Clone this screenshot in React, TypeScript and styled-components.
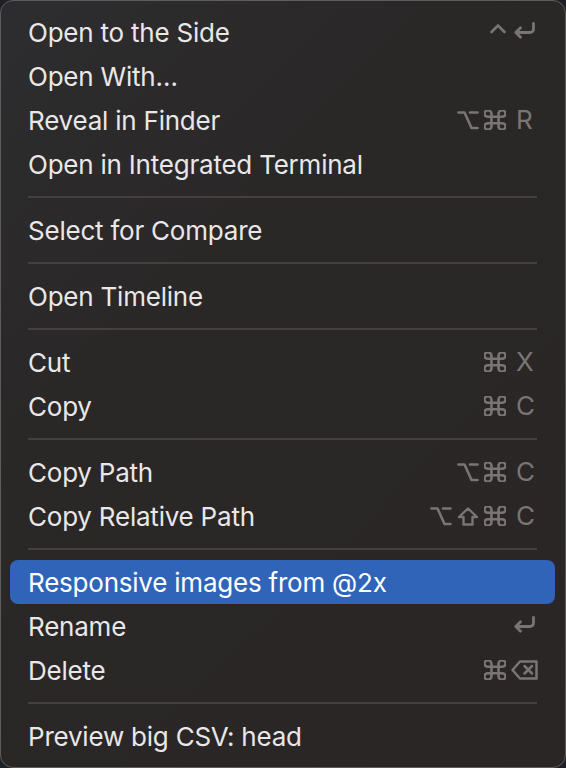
import styled, { createGlobalStyle } from "styled-components";

const GlobalStyle = createGlobalStyle`
  html, body {
    margin: 0;
    padding: 0;
    background: #1d2024;
  }
  body {
    font-family: Inter, "Noto Sans", "Liberation Sans", sans-serif;
    -webkit-font-smoothing: antialiased;
  }
`;

const KEY_COLOR = "#7a7574";

const Menu = styled.div`
  box-sizing: border-box;
  width: 566px;
  height: 768px;
  padding: 9px 10px 9px 9px;
  border: 1px solid #5f5c5c;
  border-radius: 13px;
  background: linear-gradient(135deg, #2d2d2f 0%, #2a2727 35%, #2a2626 100%);
  display: flex;
  flex-direction: column;
  overflow: hidden;
`;

const Row = styled.div<{ $active?: boolean }>`
  height: 44px;
  flex-shrink: 0;
  display: flex;
  align-items: center;
  justify-content: space-between;
  padding: 1px 19px 0 18px;
  box-sizing: border-box;
  border-radius: 8px;
  background: ${p => (p.$active ? "#2f64b9" : "transparent")};
  color: ${p => (p.$active ? "#ffffff" : "#e9e7e7")};
  font-size: 26px;
  letter-spacing: -0.22px;
  line-height: 1;
`;

const Label = styled.span`
  white-space: nowrap;
`;

const Separator = styled.div`
  height: 22px;
  flex-shrink: 0;
  display: flex;
  align-items: center;
  padding: 0 18px;

  &::after {
    content: "";
    flex: 1;
    height: 2px;
    background: #45403f;
  }
`;

const Keys = styled.span`
  display: flex;
  align-items: center;
  gap: 5px;
  margin-top: -1px;
  color: ${KEY_COLOR};
`;

const Letter = styled.span`
  width: 20px;
  margin-left: 5px;
  font-size: 26px;
  letter-spacing: 0;
  color: ${KEY_COLOR};
`;

const Glyph = styled.svg<{ $pull?: number }>`
  display: block;
  flex-shrink: 0;
  margin-right: ${p => (p.$pull ? `-${p.$pull}px` : "0")};
  fill: none;
  stroke: ${KEY_COLOR};
  stroke-linecap: round;
  stroke-linejoin: round;
`;

const Control = () => (
  <Glyph width="16" height="20" viewBox="0 0 16 20" strokeWidth={2.6} style={{ marginRight: 2 }}>
    <path d="M1.5 10 L8 3.5 L14.5 10" />
  </Glyph>
);

const Return = () => (
  <Glyph width="23" height="20" viewBox="0 0 23 20" strokeWidth={2.8}>
    <path d="M20.5 1.5 V6.5 Q20.5 10.5 16.5 10.5 H3.5" />
    <path d="M7.5 5.8 L2.8 10.5 L7.5 15.2" />
  </Glyph>
);

const Option = () => (
  <Glyph width="22" height="20" viewBox="0 0 22 20" strokeWidth={2.6}>
    <path d="M1.5 2.5 H7.5 L14.5 18 H20.5" />
    <path d="M13 2.5 H20.5" />
  </Glyph>
);

const Command = () => (
  <Glyph width="22" height="20" viewBox="2.7 2.7 18.6 18.6" preserveAspectRatio="none" strokeWidth={2.2}>
    <path d="M15 6v12a3 3 0 1 0 3-3H6a3 3 0 1 0 3 3V6a3 3 0 1 0-3 3h12a3 3 0 1 0-3-3" />
  </Glyph>
);

const Shift = () => (
  <Glyph width="22" height="20" viewBox="0 0 22 20" strokeWidth={2.4}>
    <path d="M11 2.5 L20 11 H15.5 V18.5 H6.5 V11 H2 Z" />
  </Glyph>
);

const Backspace = () => (
  <Glyph width="27" height="20" viewBox="0 0 27 20" strokeWidth={2.5} $pull={2}>
    <path d="M9 1.5 H25.5 V18.5 H9 L1.5 10 Z" />
    <path d="M13.5 6 L21 13.5 M21 6 L13.5 13.5" />
  </Glyph>
);

type Key = "ctrl" | "ret" | "opt" | "cmd" | "shift" | "del" | string;

const renderKey = (k: Key, i: number) => {
  switch (k) {
    case "ctrl": return <Control key={i} />;
    case "ret": return <Return key={i} />;
    case "opt": return <Option key={i} />;
    case "cmd": return <Command key={i} />;
    case "shift": return <Shift key={i} />;
    case "del": return <Backspace key={i} />;
    default: return <Letter key={i}>{k}</Letter>;
  }
};

type Item = { label: string; keys?: Key[]; active?: boolean } | "sep";

const items: Item[] = [
  { label: "Open to the Side", keys: ["ctrl", "ret"] },
  { label: "Open With..." },
  { label: "Reveal in Finder", keys: ["opt", "cmd", "R"] },
  { label: "Open in Integrated Terminal" },
  "sep",
  { label: "Select for Compare" },
  "sep",
  { label: "Open Timeline" },
  "sep",
  { label: "Cut", keys: ["cmd", "X"] },
  { label: "Copy", keys: ["cmd", "C"] },
  "sep",
  { label: "Copy Path", keys: ["opt", "cmd", "C"] },
  { label: "Copy Relative Path", keys: ["opt", "shift", "cmd", "C"] },
  "sep",
  { label: "Responsive images from @2x", active: true },
  { label: "Rename", keys: ["ret"] },
  { label: "Delete", keys: ["cmd", "del"] },
  "sep",
  { label: "Preview big CSV: head" },
];

export default function App() {
  return (
    <>
      <GlobalStyle />
      <Menu>
        {items.map((it, i) =>
          it === "sep" ? (
            <Separator key={i} />
          ) : (
            <Row key={i} $active={it.active}>
              <Label>{it.label.replace("...", "\u2026")}</Label>
              {it.keys && <Keys>{it.keys.map(renderKey)}</Keys>}
            </Row>
          )
        )}
      </Menu>
    </>
  );
}
